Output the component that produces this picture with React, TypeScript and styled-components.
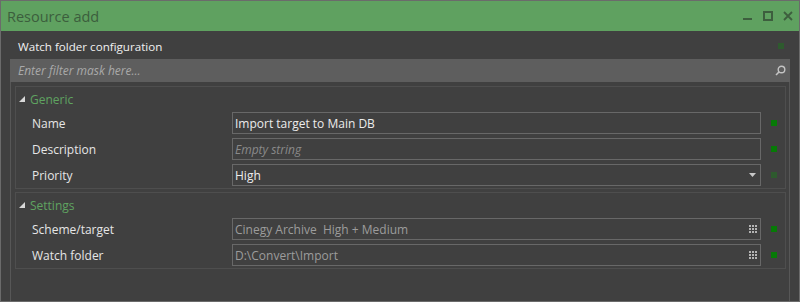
import * as React from "react";
import styled, { createGlobalStyle } from "styled-components";

const GlobalStyle = createGlobalStyle`
  html, body {
    margin: 0;
    padding: 0;
    background: #404040;
  }
  * {
    box-sizing: border-box;
  }
`;

const FONT = `"Open Sans", "Noto Sans", sans-serif`;

const Window = styled.div`
  width: 800px;
  height: 302px;
  border: 1px solid #6b6b6b;
  background: #404040;
  display: flex;
  flex-direction: column;
  font-family: ${FONT};
  font-size: 12px;
  color: #e6e6e6;
  overflow: hidden;
`;

const TitleBar = styled.div`
  height: 30px;
  flex: none;
  background: #5fa160;
  display: flex;
  align-items: center;
  justify-content: space-between;
  padding: 0 6px 0 6px;
`;

const Title = styled.span`
  font-size: 14.5px;
  color: #3c5e3d;
`;

const Controls = styled.div`
  display: flex;
  align-items: center;
  gap: 10px;
  color: #3d5e3e;
`;

const Caption = styled.div`
  height: 28px;
  flex: none;
  display: flex;
  align-items: center;
  justify-content: space-between;
  padding: 2px 15px 0 17px;
  color: #f0f0f0;
  font-size: 11.6px;
`;

const Indicator = styled.span<{ $dim?: boolean }>`
  display: block;
  width: 6px;
  height: 6px;
  background: ${({ $dim }) => ($dim ? "#2e5a2e" : "#067a06")};
`;

const FilterBar = styled.div`
  height: 23px;
  flex: none;
  margin: 0 9px;
  background: #5e5e5e;
  display: flex;
  align-items: center;
  justify-content: space-between;
  padding: 0 4px 0 8px;
`;

const FilterHint = styled.span`
  font-style: italic;
  color: #a9a9a9;
`;

const Grid = styled.div`
  flex: 1;
  margin: 0 9px;
  border-left: 1px solid #575757;
  border-right: 1px solid #575757;
  padding: 4px 3px 0 4px;
  display: flex;
  flex-direction: column;
  gap: 3px;
`;

const Group = styled.div`
  border: 1px solid #4e4e4e;
`;

const GroupHeader = styled.div`
  height: 23px;
  display: flex;
  align-items: center;
  gap: 5px;
  padding: 1px 0 0 3px;
  color: #5fa360;
`;

const Row = styled.div`
  height: 26px;
  display: grid;
  grid-template-columns: 216px 1fr 24px;
  align-items: center;
`;

const Label = styled.span`
  padding-left: 16px;
  color: #e6e6e6;
`;

const Field = styled.div<{ $tone?: "value" | "empty" | "readonly" }>`
  height: 22px;
  border: 1px solid #686868;
  display: flex;
  align-items: center;
  justify-content: space-between;
  padding: 0 3px 0 2px;
  white-space: pre;
  color: ${({ $tone }) =>
    $tone === "empty" ? "#8a8a8a" : $tone === "readonly" ? "#9c9c9c" : "#ececec"};
  font-style: ${({ $tone }) => ($tone === "empty" ? "italic" : "normal")};
`;

const Mark = styled.div`
  padding-left: 10px;
`;

function Triangle() {
  return (
    <svg width="6" height="6" viewBox="0 0 6 6">
      <polygon points="6,0 6,6 0,6" fill="#d8d8d8" />
    </svg>
  );
}

function DotsIcon() {
  const cells = [0, 3, 6];
  return (
    <svg width="8" height="8" viewBox="0 0 8 8">
      {cells.map((y) =>
        cells.map((x) => <rect key={`${x}-${y}`} x={x} y={y} width="2" height="2" fill="#b4b4b4" />)
      )}
    </svg>
  );
}

function DropArrow() {
  return (
    <svg width="7" height="4" viewBox="0 0 7 4" style={{ marginRight: 1 }}>
      <polygon points="0,0 7,0 3.5,4" fill="#c8c8c8" />
    </svg>
  );
}

type Prop = {
  label: string;
  value: string;
  tone?: "value" | "empty" | "readonly";
  editor?: "drop" | "dots";
  dim?: boolean;
};

const groups: { title: string; items: Prop[] }[] = [
  {
    title: "Generic",
    items: [
      { label: "Name", value: "Import target to Main DB" },
      { label: "Description", value: "Empty string", tone: "empty" },
      { label: "Priority", value: "High", editor: "drop", dim: true },
    ],
  },
  {
    title: "Settings",
    items: [
      { label: "Scheme/target", value: "Cinegy Archive  High + Medium", tone: "readonly", editor: "dots" },
      { label: "Watch folder", value: "D:\\Convert\\Import", tone: "readonly", editor: "dots" },
    ],
  },
];

export default function App() {
  return (
    <>
      <GlobalStyle />
      <Window>
        <TitleBar>
          <Title>Resource add</Title>
          <Controls>
            <svg width="10" height="10" viewBox="0 0 10 10">
              <rect x="0" y="7" width="9" height="2" fill="currentColor" />
            </svg>
            <svg width="10" height="10" viewBox="0 0 10 10">
              <rect x="1" y="1" width="8" height="8" fill="none" stroke="currentColor" strokeWidth="2" />
            </svg>
            <svg width="10" height="10" viewBox="0 0 10 10">
              <path d="M1 1 L9 9 M9 1 L1 9" stroke="currentColor" strokeWidth="1.8" />
            </svg>
          </Controls>
        </TitleBar>
        <Caption>
          <span>Watch folder configuration</span>
          <Indicator $dim />
        </Caption>
        <FilterBar>
          <FilterHint>Enter filter mask here...</FilterHint>
          <svg width="11" height="11" viewBox="0 0 11 11">
            <circle cx="6.5" cy="4.5" r="3.3" fill="none" stroke="#c4c4c4" strokeWidth="1.4" />
            <path d="M4.2 6.8 L1 10" stroke="#c4c4c4" strokeWidth="1.6" />
          </svg>
        </FilterBar>
        <Grid>
          {groups.map((g) => (
            <Group key={g.title}>
              <GroupHeader>
                <Triangle />
                <span>{g.title}</span>
              </GroupHeader>
              {g.items.map((p) => (
                <Row key={p.label}>
                  <Label>{p.label}</Label>
                  <Field $tone={p.tone}>
                    <span>{p.value}</span>
                    {p.editor === "drop" && <DropArrow />}
                    {p.editor === "dots" && <DotsIcon />}
                  </Field>
                  <Mark>
                    <Indicator $dim={p.dim} />
                  </Mark>
                </Row>
              ))}
            </Group>
          ))}
        </Grid>
      </Window>
    </>
  );
}
